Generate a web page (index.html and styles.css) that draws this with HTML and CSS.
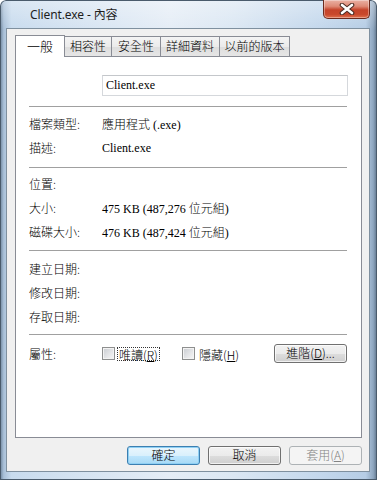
FILE: index.html
```html
<!DOCTYPE html>
<html>
<head>
<meta charset="utf-8">
<link rel="stylesheet" href="styles.css">
</head>
<body>
<div class="window">
  <div class="titlebar">
    <span class="title">Client.exe - 內容</span>
    <div class="close">
      <svg width="20" height="12" viewBox="0 0 20 12">
        <path d="M5 2 L15 10 M15 2 L5 10" stroke="#4a2a22" stroke-width="4.6" stroke-linecap="round"/>
        <path d="M5 2 L15 10 M15 2 L5 10" stroke="#ffffff" stroke-width="2.6" stroke-linecap="round"/>
      </svg>
    </div>
  </div>
  <div class="client">
    <div class="tabs">
      <div class="tab active w1">一般</div>
      <div class="tab w2">相容性</div>
      <div class="tab w3">安全性</div>
      <div class="tab w4">詳細資料</div>
      <div class="tab w5">以前的版本</div>
    </div>
    <div class="panel">
      <div class="namebox">Client.exe</div>
      <div class="sep sep1"></div>
      <div class="group g1">
        <div class="row"><span class="label">檔案類型:</span><span class="value"><span class="cjk">應用程式</span> (.exe)</span></div>
        <div class="row"><span class="label">描述:</span><span class="value">Client.exe</span></div>
      </div>
      <div class="sep sep2"></div>
      <div class="group g2">
        <div class="row"><span class="label">位置:</span><span class="value"></span></div>
        <div class="row"><span class="label">大小:</span><span class="value">475 KB (487,276 <span class="cjk">位元組</span>)</span></div>
        <div class="row"><span class="label">磁碟大小:</span><span class="value">476 KB (487,424 <span class="cjk">位元組</span>)</span></div>
      </div>
      <div class="sep sep3"></div>
      <div class="group g3">
        <div class="row"><span class="label">建立日期:</span><span class="value"></span></div>
        <div class="row"><span class="label">修改日期:</span><span class="value"></span></div>
        <div class="row"><span class="label">存取日期:</span><span class="value"></span></div>
      </div>
      <div class="sep sep4"></div>
      <div class="attr">
        <span class="label">屬性:</span>
        <div class="chk-item first"><span class="chk"></span><span class="chk-label focus">唯讀(<u>R</u>)</span></div>
        <div class="chk-item"><span class="chk"></span><span class="chk-label">隱藏(<u>H</u>)</span></div>
        <div class="btn adv">進階(<u>D</u>)...</div>
      </div>
    </div>
    <div class="buttons">
      <div class="btn default">確定</div>
      <div class="btn">取消</div>
      <div class="btn disabled">套用(<u>A</u>)</div>
    </div>
  </div>
</div>
</body>
</html>
```
FILE: styles.css
```css
* { box-sizing: border-box; }
html, body { margin: 0; padding: 0; }
body { width: 377px; height: 480px; overflow: hidden; background: #fff; }

.window {
  width: 377px;
  height: 480px;
  display: flex;
  flex-direction: column;
  border-radius: 6px 6px 0 0;
  background:
    linear-gradient(to bottom, rgba(255,255,255,0.35) 0, rgba(255,255,255,0) 30px),
    linear-gradient(to right, #6d849c 0, #a9c0d8 1%, #c8dbee 3%, #d3e2f1 18%, #e5edf6 45%, #dbe7f3 62%, #c3d7ec 85%, #b6cde5 97%, #8ea6bf 99%, #5e738a 100%);
  box-shadow: inset 0 0 0 1px #4a5b6c;
}

.titlebar {
  height: 29px;
  display: flex;
  align-items: flex-start;
  padding-left: 30px;
}
.title {
  font-family: "Noto Sans", "Noto Sans CJK TC", sans-serif;
  font-size: 12px;
  line-height: 29px;
  color: #1e1e1e;
  letter-spacing: -0.1px;
}
.close {
  margin-left: auto;
  margin-right: 7px;
  width: 47px;
  height: 19px;
  border: 1px solid #6b2a1e;
  border-top: none;
  border-radius: 0 0 5px 5px;
  background: linear-gradient(to bottom, #eab1a4 0, #de8a76 35%, #c5432a 55%, #c9482c 80%, #e0704e 100%);
  box-shadow: inset 0 0 0 1px rgba(255,255,255,0.35);
  display: flex;
  align-items: center;
  justify-content: center;
}

.client {
  margin: 0 8px 9px 7px;
  height: 442px;
  background: #f0f0f0;
  box-shadow: 0 0 0 1px #7f909f;
  padding: 6px 7px 0 8px;
  font-family: "Liberation Serif", "Noto Sans CJK TC", serif;
  font-size: 12px;
  color: #000;
}

.cjk, .label, .tab, .chk-label, .btn {
  font-family: "Noto Sans CJK TC", sans-serif;
  font-weight: 300;
}

.tabs {
  display: flex;
  align-items: flex-end;
  height: 21px;
}
.tab {
  height: 20px;
  margin-left: -1px;
  border: 1px solid #898c95;
  border-bottom: none;
  background: linear-gradient(to bottom, #f4f4f4 0, #ebebeb 50%, #dddddd 51%, #e6e6e6 100%);
  font-size: 12px;
  line-height: 18px;
  text-align: center;
}
.tab.active {
  position: relative;
  z-index: 1;
  height: 22px;
  margin-bottom: -1px;
  margin-left: 0;
  background: #fff;
  line-height: 20px;
  font-size: 13px;
}
.w1 { width: 50px; }
.w2 { width: 48px; }
.w3 { width: 50px; }
.w4 { width: 60px; }
.w5 { width: 71px; }

.panel {
  width: 347px;
  height: 382px;
  background: #fff;
  border: 1px solid #898c95;
  padding: 18px 14px 0 13px;
}

.namebox {
  margin-left: 73px;
  width: 246px;
  height: 21px;
  border: 1px solid #d5d8dc;
  border-top-color: #c4c7cb;
  padding-left: 3px;
  line-height: 19px;
  font-size: 12px;
}

.sep { height: 1px; background: #a0a0a0; width: 318px; }
.sep1 { margin-top: 10px; }
.g1 { padding-top: 5px; padding-bottom: 7px; }
.g2 { padding-top: 4px; padding-bottom: 6px; }
.g3 { padding-top: 6px; padding-bottom: 5px; }

.row {
  display: flex;
  height: 24px;
  line-height: 24px;
  font-size: 12px;
}
.label {
  width: 73px;
  flex: none;
  font-size: 12px;
}
.value { font-size: 12px; }

.attr {
  margin-top: 9px;
  height: 19px;
  display: flex;
  align-items: center;
}
.chk-item {
  display: flex;
  align-items: center;
  width: 80px;
}
.chk {
  width: 13px;
  height: 13px;
  flex: none;
  border: 1px solid #8e8f8f;
  background: linear-gradient(135deg, #c9ccd1 0, #e6e7e9 60%, #f7f7f7 100%);
  box-shadow: inset 0 0 0 1px #f3f3f3;
}
.chk-label {
  margin-left: 2px;
  padding: 0 1px;
  height: 14px;
  line-height: 13px;
  font-size: 12px;
  border: 1px solid transparent;
}
.chk-label.focus { border: 1px dotted #333; }

.btn {
  width: 73px;
  height: 19px;
  border: 1px solid #707070;
  border-radius: 3px;
  background: linear-gradient(to bottom, #f2f2f2 0, #ebebeb 50%, #dddddd 51%, #cfcfcf 100%);
  box-shadow: inset 0 0 0 1px rgba(255,255,255,0.7);
  text-align: center;
  line-height: 16px;
  font-size: 12px;
  color: #000;
}
.btn.adv { margin-left: auto; }

.buttons {
  display: flex;
  justify-content: flex-end;
  gap: 8px;
  margin-top: 8px;
}
.btn.default {
  border-color: #3c7fb1;
  background: linear-gradient(to bottom, #eaf6fd 0, #d9f0fc 50%, #bee6fd 51%, #a7d9f5 100%);
  box-shadow: inset 0 0 0 1px #8fd0f4;
}
.btn.disabled {
  border-color: #adb2b5;
  background: #f4f4f4;
  box-shadow: none;
  color: #838383;
}
```
